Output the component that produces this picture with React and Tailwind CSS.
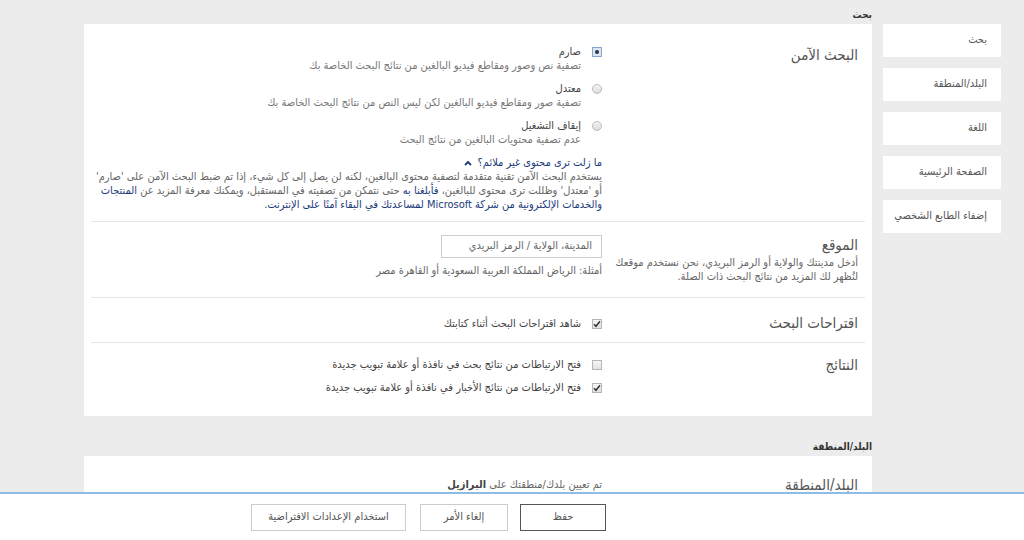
import React from "react"

const navItems = ["بحث", "البلد/المنطقة", "اللغة", "الصفحة الرئيسية", "إضفاء الطابع الشخصي"]

function Radio({ checked }) {
  if (checked) {
    return (
      <span className="mt-[2px] flex h-[10px] w-[10px] shrink-0 items-center justify-center border border-[#8aa6c8] bg-[#dbe6f4]">
        <span className="h-[4px] w-[4px] rounded-full bg-[#333]" />
      </span>
    )
  }
  return <span className="mt-[2px] h-[10px] w-[10px] shrink-0 rounded-full border border-[#bdbdbd] bg-gradient-to-b from-[#f4f4f4] to-[#dcdcdc]" />
}

function Checkbox({ checked }) {
  return (
    <span className="flex h-[10px] w-[10px] shrink-0 items-center justify-center border border-[#b5b5b5] bg-gradient-to-b from-[#f6f6f6] to-[#e2e2e2]">
      {checked && (
        <svg width="8" height="8" viewBox="0 0 8 8">
          <path d="M1 4.2 L3 6.3 L7 1.2" fill="none" stroke="#333" strokeWidth="1.5" />
        </svg>
      )}
    </span>
  )
}

function Row({ title, desc, children, last, top = "pt-[19px]", bottom = "pb-[13px]" }) {
  return (
    <div className={`mx-[7px] flex ${top} ${bottom} ${last ? "" : "border-b border-[#e6e6e6]"}`}>
      <div className="w-[221px] shrink-0 pr-[7px]">
        <div className="text-[15px] leading-[20px] text-[#555]">{title}</div>
        {desc && <div className="mt-[1px] whitespace-nowrap text-[11px] leading-[14px] text-[#666]">{desc}</div>}
      </div>
      <div className="mr-[42px] flex-1">{children}</div>
    </div>
  )
}

export default function App() {
  return (
    <div
      dir="rtl"
      className="relative h-[540px] overflow-hidden bg-[#ececec] text-[#444]"
      style={{ fontFamily: '"DejaVu Sans Condensed", "DejaVu Sans", sans-serif' }}
    >
      <div className="flex gap-[11px] pr-[23px]">
        {/* side nav */}
        <nav className="flex w-[118px] shrink-0 flex-col gap-[11px] pt-[24px]">
          {navItems.map((item) => (
            <div key={item} className="flex h-[33px] items-center bg-white pr-[14px] text-[11px] text-[#555]">
              {item}
            </div>
          ))}
        </nav>

        <main className="w-[788px] shrink-0">
          <h2 className="h-[24px] pt-[8px] text-[10px] font-bold leading-[14px] text-[#333]">بحث</h2>
          <section className="bg-white pb-[8px]">
            <Row title="البحث الآمن" top="pt-[21px]" bottom="pb-[9px]">
              <div className="flex flex-col gap-[9px]">
                {[
                  ["صارم", "تصفية نص وصور ومقاطع فيديو البالغين من نتائج البحث الخاصة بك", true],
                  ["معتدل", "تصفية صور ومقاطع فيديو البالغين لكن ليس النص من نتائج البحث الخاصة بك", false],
                  ["إيقاف التشغيل", "عدم تصفية محتويات البالغين من نتائج البحث", false],
                ].map(([label, d, c]) => (
                  <div key={label} className="flex gap-[11px]">
                    <Radio checked={c} />
                    <div className="text-[11px] leading-[14px]">
                      <div className="text-[#444]">{label}</div>
                      <div className="text-[#777]">{d}</div>
                    </div>
                  </div>
                ))}
              </div>
              <div className="mt-[9px] flex items-center gap-[6px] text-[11px] leading-[14px] text-[#1b3a7a]">
                ما زلت ترى محتوى غير ملائم؟
                <svg width="8" height="6" viewBox="0 0 8 6">
                  <path d="M1 5 L4 2 L7 5" fill="none" stroke="#1b3a7a" strokeWidth="1.8" />
                </svg>
              </div>
              <p className="whitespace-nowrap text-[11px] leading-[14px] text-[#666]">
                يستخدم البحث الآمن تقنية متقدمة لتصفية محتوى البالغين، لكنه لن يصل إلى كل شيء، إذا تم ضبط البحث الآمن على 'صارم'
                <br />
                أو 'معتدل' وظللت ترى محتوى للبالغين، <span className="text-[#1b3a7a]">فأبلغنا به</span> حتى نتمكن من تصفيته في
                المستقبل، ويمكنك معرفة المزيد عن <span className="text-[#1b3a7a]">المنتجات</span>
                <br />
                <span className="text-[#1b3a7a]">
                  والخدمات الإلكترونية من شركة Microsoft لمساعدتك في البقاء آمنًا على الإنترنت.
                </span>
              </p>
            </Row>

            <Row
              title="الموقع"
              desc={
                <>
                  أدخل مدينتك والولاية أو الرمز البريدي، نحن نستخدم موقعك
                  <br />
                  لنُظهر لك المزيد من نتائج البحث ذات الصلة.
                </>
              }
              top="pt-[13px]"
              bottom="pb-[13px]"
            >
              <div className="flex h-[23px] w-[161px] items-center border border-[#ccc] pr-[9px] text-[11px] text-[#666]">
                المدينة، الولاية / الرمز البريدي
              </div>
              <div className="mt-[6px] text-[11px] leading-[14px] text-[#666]">
                أمثلة: الرياض المملكة العربية السعودية أو القاهرة مصر
              </div>
            </Row>

            <Row title="اقتراحات البحث" top="pt-[15px]" bottom="pb-[9px]">
              <div className="flex items-center gap-[11px] pt-[3px] text-[11px] text-[#444]">
                <Checkbox checked />
                شاهد اقتراحات البحث أثناء كتابتك
              </div>
            </Row>

            <Row title="النتائج" top="pt-[12px]" last>
              <div className="flex flex-col gap-[9px] pt-[3px] text-[11px] leading-[14px] text-[#444]">
                <div className="flex items-center gap-[11px]">
                  <Checkbox />
                  فتح الارتباطات من نتائج بحث في نافذة أو علامة تبويب جديدة
                </div>
                <div className="flex items-center gap-[11px]">
                  <Checkbox checked />
                  فتح الارتباطات من نتائج الأخبار في نافذة أو علامة تبويب جديدة
                </div>
              </div>
            </Row>
          </section>

          <h2 className="h-[40px] pt-[24px] text-[10px] font-bold leading-[14px] text-[#333]">البلد/المنطقة</h2>
          <section className="bg-white">
            <Row title="البلد/المنطقة" top="pt-[19px]" last>
              <div className="pt-[2px] text-[11px] text-[#666]">
                تم تعيين بلدك/منطقتك على <span className="font-bold text-[#444]">البرازيل</span>
              </div>
            </Row>
          </section>
        </main>
      </div>

      {/* fixed footer */}
      <div className="absolute bottom-0 left-0 right-0 flex h-[48px] gap-[12px] border-t-2 border-[#8dbde6] bg-white pr-[418px] pt-[10px]">
        <button className="h-[27px] w-[86px] border border-[#555] bg-white text-[11px] text-[#555]">حفظ</button>
        <button className="h-[27px] w-[88px] border border-[#ccc] bg-white text-[11px] text-[#555]">إلغاء الأمر</button>
        <button className="mr-[2px] h-[27px] w-[155px] border border-[#ccc] bg-white text-[11px] text-[#555]">
          استخدام الإعدادات الافتراضية
        </button>
      </div>
    </div>
  )
}
